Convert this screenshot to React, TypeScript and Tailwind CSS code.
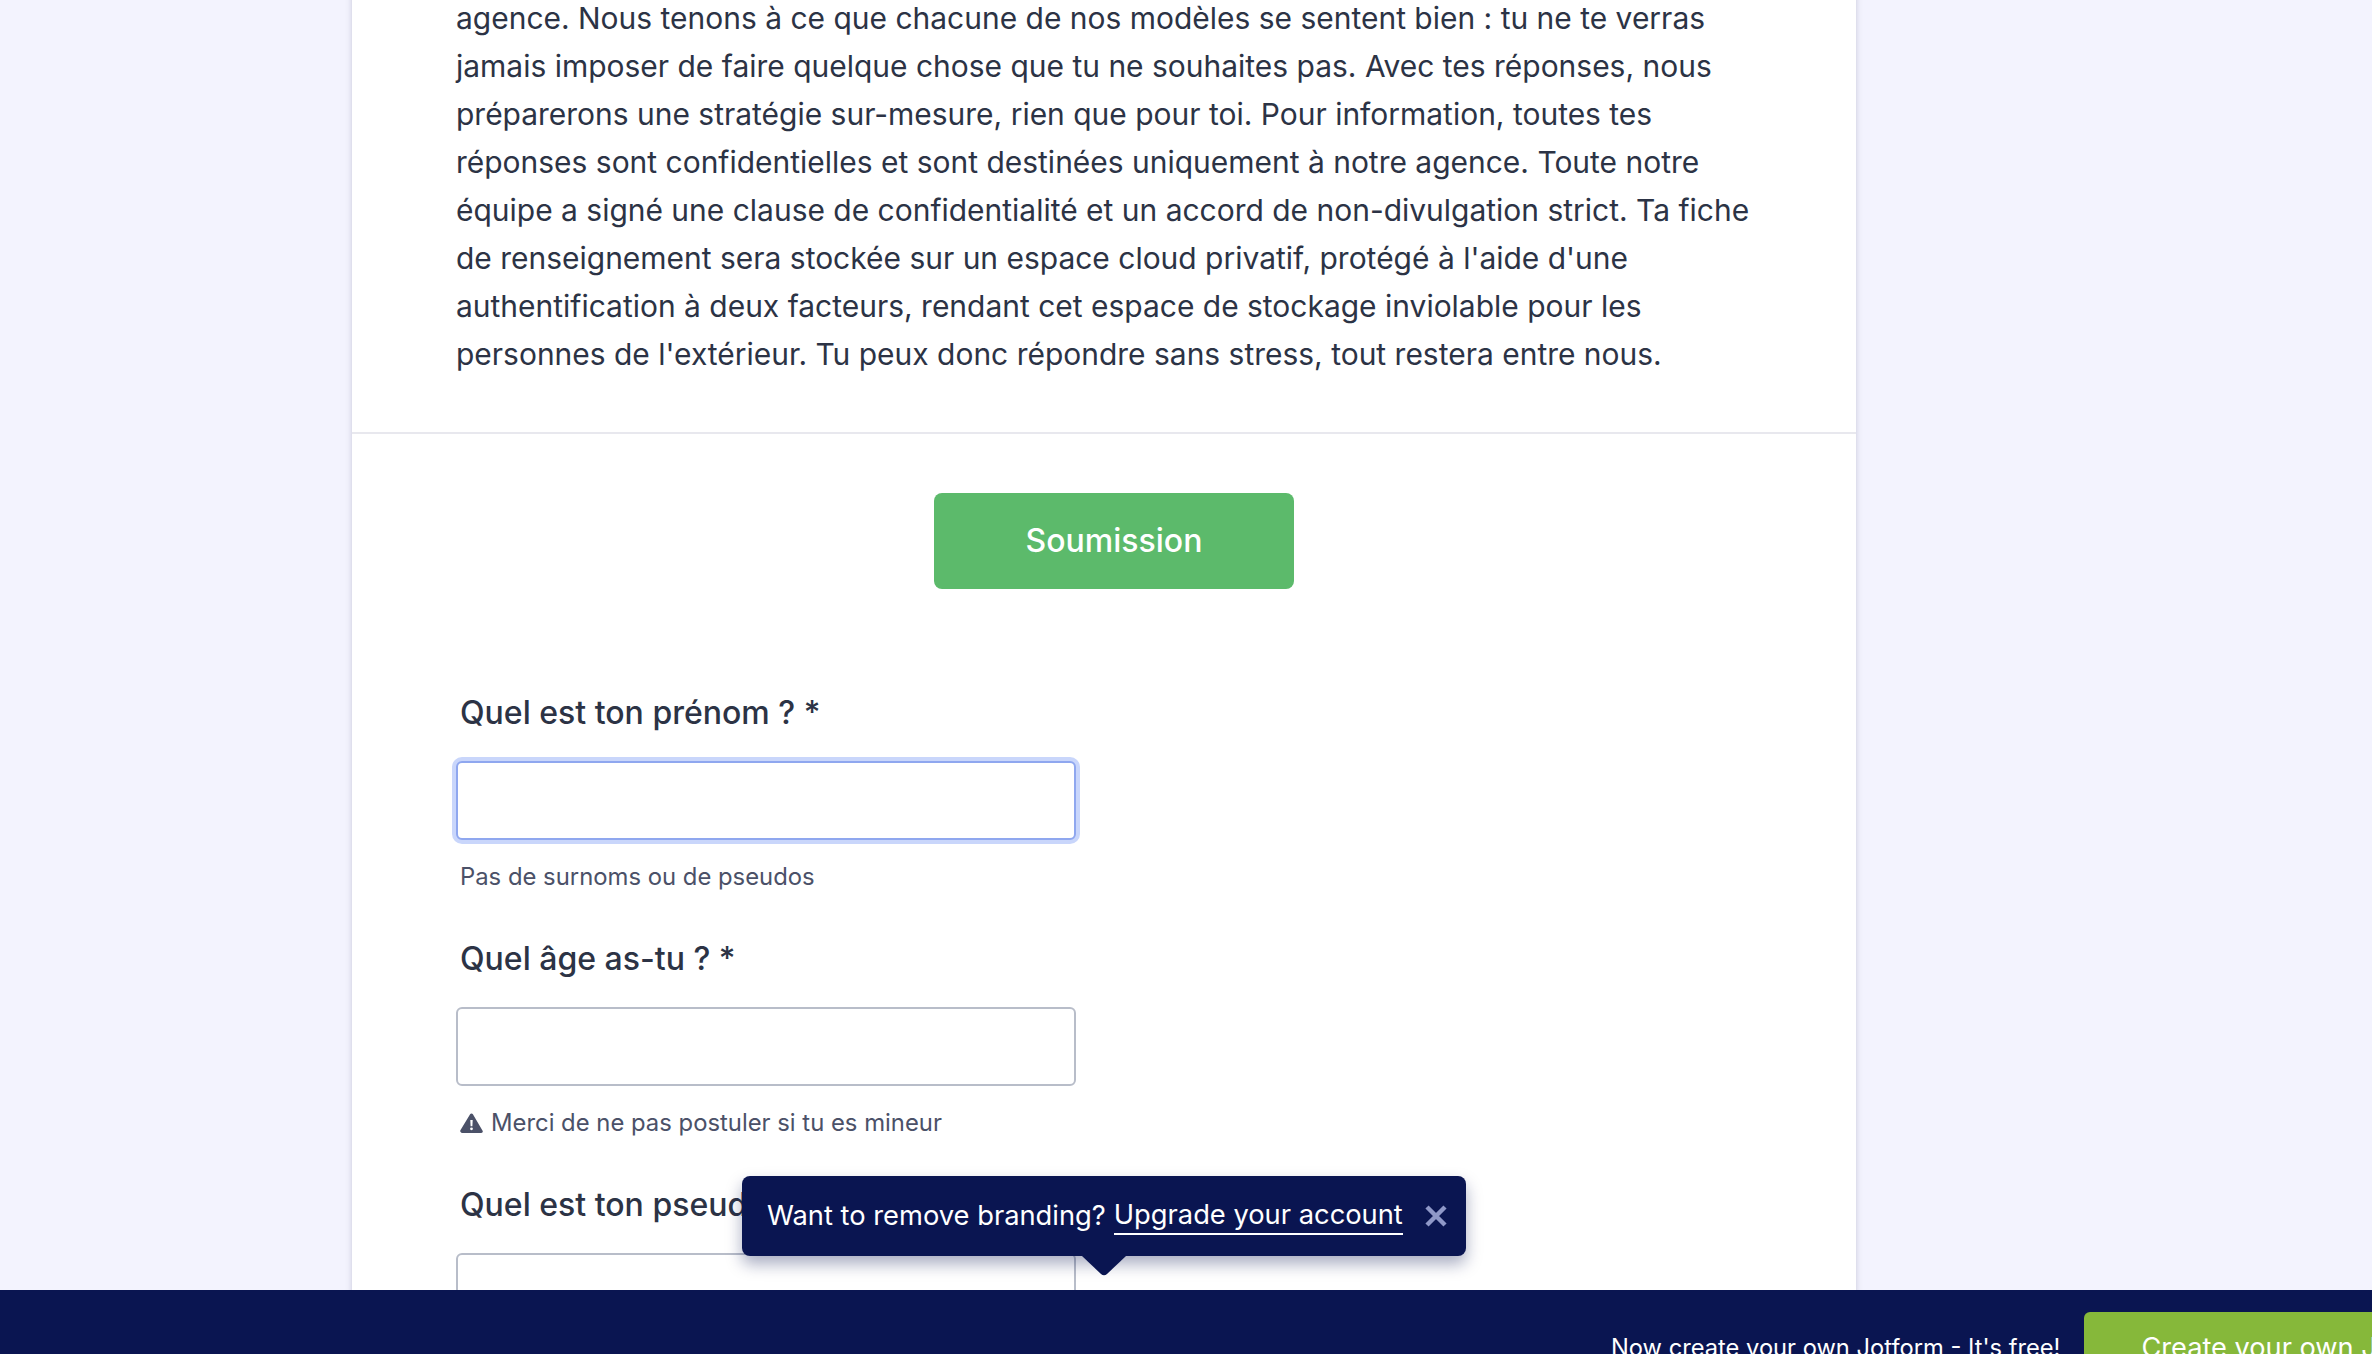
const lines = [
  "agence. Nous tenons à ce que chacune de nos modèles se sentent bien : tu ne te verras",
  "jamais imposer de faire quelque chose que tu ne souhaites pas. Avec tes réponses, nous",
  "préparerons une stratégie sur-mesure, rien que pour toi. Pour information, toutes tes",
  "réponses sont confidentielles et sont destinées uniquement à notre agence. Toute notre",
  "équipe a signé une clause de confidentialité et un accord de non-divulgation strict. Ta fiche",
  "de renseignement sera stockée sur un espace cloud privatif, protégé à l'aide d'une",
  "authentification à deux facteurs, rendant cet espace de stockage inviolable pour les",
  "personnes de l'extérieur. Tu peux donc répondre sans stress, tout restera entre nous.",
];

function Label({ children }: { children: React.ReactNode }) {
  return <div className="ml-1 h-[48px] text-[32px] leading-[48px] font-medium text-[#2c3345]">{children}</div>;
}

export default function App() {
  return (
    <div className="relative flex h-[1354px] flex-col overflow-hidden bg-[#f3f3fe] font-['Inter',sans-serif]">
      <main className="min-h-0 flex-1 overflow-hidden">
        <div className="ml-[352px] w-[1504px] bg-white shadow-[0_0_6px_rgba(70,70,100,0.25)]">
          <section className="-mt-[6px] border-b-2 border-[#e8e8ee] px-[104px] pb-[54px] text-[29.97px] leading-[48px] text-[#2c3345]">
            {lines.map((l) => (
              <div key={l} className="whitespace-nowrap">{l}</div>
            ))}
          </section>
          <div className="flex justify-center pt-[59px]">
            <button className="ml-[20px] h-[96px] w-[360px] rounded-lg bg-[#5cba6b] text-[32px] font-medium text-white">
              Soumission
            </button>
          </div>
          <div className="px-[104px] pt-[100px] pb-[40px]">
            <Label>Quel est ton prénom ? *</Label>
            <div className="mt-[24px] h-[79px] w-[620px] rounded-md border-2 border-[#8fa7ef] bg-white shadow-[0_0_0_4px_#c9d6fb]" />
            <div className="mt-[19px] ml-1 h-[36px] text-[23.85px] leading-[36px] text-[#4b5168]">Pas de surnoms ou de pseudos</div>
            <div className="mt-[40px]"><Label>Quel âge as-tu ? *</Label></div>
            <div className="mt-[24px] h-[79px] w-[620px] rounded-md border-2 border-[#b8bdc9] bg-white" />
            <div className="mt-[19px] ml-1 flex h-[36px] items-center gap-[8px] text-[23.85px] leading-[36px] text-[#4b5168]">
              <svg width="23" height="20" viewBox="0 0 23 20" className="shrink-0" aria-hidden="true">
                <path fillRule="evenodd" fill="#4b5168" d="M11.5 0.5c.6 0 1.1.3 1.4.8l9.7 16.5c.6 1-.1 2.2-1.4 2.2H1.8C.5 19.5-.2 18.3.4 17.3L10.1 1.3c.3-.5.8-.8 1.4-.8zM10.3 7l.3 6.2h1.8l.3-6.2h-2.4zM11.5 14.4a1.4 1.4 0 1 0 0 2.8 1.4 1.4 0 0 0 0-2.8z" />
              </svg>
              Merci de ne pas postuler si tu es mineur
            </div>
            <div className="mt-[40px]"><Label>Quel est ton pseudo ? *</Label></div>
            <div className="mt-[24px] h-[79px] w-[620px] rounded-md border-2 border-[#b8bdc9] bg-white" />
          </div>
        </div>
      </main>

      <footer className="flex h-[64px] shrink-0 items-start overflow-hidden bg-[#0a1551] pl-[1611px]">
        <span className="mt-[40px] shrink-0 whitespace-nowrap text-[23.7px] leading-[36px] text-white">Now create your own Jotform - It's free!</span>
        <span className="mt-[22px] ml-[24px] flex h-[80px] shrink-0 items-start whitespace-nowrap rounded-t-md bg-[#86b83a] px-[57px] pt-[16px] text-[27.2px] leading-[40px] text-white">
          Create your own Jotform
        </span>
      </footer>

      <div className="absolute top-[1176px] left-[742px] flex h-[80px] w-[724px] items-center rounded-lg bg-[#0a1551] pl-[25px] text-[27.3px] text-white shadow-[0_8px_16px_rgba(10,21,81,0.35)]">
        <span className="whitespace-nowrap">Want to remove branding?</span>
        <span className="ml-[8px] whitespace-nowrap border-b-2 border-white leading-[36px]">Upgrade your account</span>
        <svg width="22" height="22" viewBox="0 0 22 22" className="ml-[22px] shrink-0" aria-hidden="true">
          <path d="M2 2l18 18M20 2L2 20" stroke="#8f98c8" strokeWidth="4.5" fill="none" />
        </svg>
        <svg width="44" height="20" viewBox="0 0 44 20" className="absolute top-[80px] left-[340px]" aria-hidden="true">
          <path d="M0 0h44L25 18c-1.8 1.6-4.2 1.6-6 0z" fill="#0a1551" />
        </svg>
      </div>
    </div>
  );
}
